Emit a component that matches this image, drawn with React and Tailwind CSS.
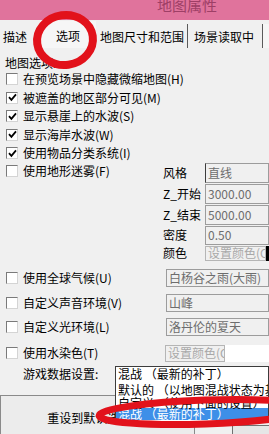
import React from 'react'

function Box(props)
{
    return (
        <span className="w-[12px] h-[12px] shrink-0 bg-white border border-[#7a7a7a] border-r-[#d4d4d4] border-b-[#d4d4d4] flex items-center justify-center">
            {props.checked && (
                <svg width="9" height="9" viewBox="0 0 9 9">
                    <path d="M1 4.2 L3.4 6.8 L8 1.4" fill="none" stroke="#000" strokeWidth="1.8" />
                </svg>
            )}
        </span>
    )
}

function Check(props)
{
    return (
        <div className={`flex items-center pl-[6px] ${props.h}`}>
            <Box checked={props.checked} />
            <span className="ml-[5px] leading-none whitespace-nowrap">{props.label}</span>
        </div>
    )
}

function Field(props)
{
    return (
        <div className={`flex-1 h-full bg-[#f0f0f0] border border-[#9c9c9c] flex items-center pl-[2px] text-[#6d6d6d] whitespace-nowrap overflow-hidden leading-none ${props.dark ? 'border-l-[#3c3c3c]' : ''}`}>
            {props.children}
        </div>
    )
}

export default function App()
{
    const checks = [
        { label: '在预览场景中隐藏微缩地图(H)', checked: false },
        { label: '被遮盖的地区部分可见(M)', checked: true },
        { label: '显示悬崖上的水波(S)', checked: true },
        { label: '显示海岸水波(W)', checked: true },
        { label: '使用物品分类系统(I)', checked: true },
    ];
    const fog = [
        { label: '风格', value: '直线', h: 'h-[20px]', dark: true },
        { label: 'Z_开始', value: '3000.00', h: 'h-[20px]' },
        { label: 'Z_结束', value: '5000.00', h: 'h-[20px]' },
        { label: '密度', value: '0.50', h: 'h-[19px]' },
    ];

    return (
        <div className="relative w-[269px] h-[434px] overflow-hidden bg-[#f0f0f0] text-[12px] text-black font-['Noto_Sans_CJK_SC',sans-serif]">
            {/* title bar */}
            <div className="h-[20px] bg-[#e0739c] flex justify-center items-start pl-[105px] overflow-hidden">
                <span className="text-[15px] leading-none text-[#9e3f66] -mt-[3px]">地图属性</span>
            </div>

            {/* tabs */}
            <div className="h-[28px] flex items-end text-[12px] leading-none whitespace-nowrap">
                <div className="w-[40px] h-[24px] flex items-center pl-[3px] pt-[2px]">描述</div>
                <div className="w-[56px] h-[27px] flex items-center justify-center bg-[#f6f6f6] pt-[2px]">选项</div>
                <div className="w-[92px] h-[24px] flex items-center pl-[4px] pt-[2px] border-r border-[#5a5a5a]">地图尺寸和范围</div>
                <div className="w-[75px] h-[24px] flex items-center pl-[6px] pt-[2px] border-r border-[#5a5a5a]">场景读取中</div>
                <div className="flex-1 h-[24px] bg-[#f6f6f6]"></div>
            </div>

            <div className="pt-[7px]">
                <div className="h-[15px] flex items-center pl-[5px] leading-none">地图选项:</div>
                {checks.map((c) => (
                    <Check key={c.label} label={c.label} checked={c.checked} h="h-[18.5px]" />
                ))}

                {/* fog group */}
                <div className="h-[98px] flex">
                    <div className="w-[163px]">
                        <Check label="使用地形迷雾(F)" checked={false} h="h-[16px]" />
                    </div>
                    <div className="flex-1 flex flex-col gap-[1px]">
                        {fog.map((f) => (
                            <div key={f.label} className={`flex items-center ${f.h}`}>
                                <span className="w-[42px] leading-none">{f.label}</span>
                                <Field dark={f.dark}>{f.value}</Field>
                            </div>
                        ))}
                        <div className="flex items-center h-[15px]">
                            <span className="w-[42px] leading-none">颜色</span>
                            <div className="w-[61px] h-full border border-[#b5b5b5] flex items-center pl-[2px] text-[#a8a8a8] overflow-hidden whitespace-nowrap leading-none">设置颜色(C</div>
                            <div className="w-[3px] h-full bg-black"></div>
                        </div>
                    </div>
                </div>

                {/* environment */}
                <div className="mt-[8px] h-[18px] flex items-center">
                    <div className="w-[166px]"><Check label="使用全球气候(U)" checked={false} h="h-[18px]" /></div>
                    <Field>白杨谷之雨(大雨)</Field>
                </div>
                <div className="mt-[7px] h-[18px] flex items-center">
                    <div className="w-[166px]"><Check label="自定义声音环境(V)" checked={false} h="h-[18px]" /></div>
                    <Field>山峰</Field>
                </div>
                <div className="mt-[6px] h-[18px] flex items-center">
                    <div className="w-[166px]"><Check label="自定义光环境(L)" checked={false} h="h-[18px]" /></div>
                    <Field>洛丹伦的夏天</Field>
                </div>
                <div className="mt-[9px] h-[17px] flex items-center">
                    <div className="w-[165px]"><Check label="使用水染色(T)" checked={false} h="h-[17px]" /></div>
                    <div className="w-[60px] h-full border border-[#b5b5b5] flex items-center pl-[2px] text-[#a8a8a8] overflow-hidden whitespace-nowrap leading-none">设置颜色(C</div>
                    <div className="flex-1 h-full bg-white"></div>
                </div>
                <div className="mt-[4px] h-[16px] flex items-center">
                    <span className="w-[115px] pl-[23px] leading-none">游戏数据设置:</span>
                    <div className="flex-1 h-full bg-white border border-[#3c3c3c] flex items-center pl-[2px] leading-none whitespace-nowrap">混战 （最新的补丁）</div>
                </div>

                {/* bottom buttons */}
                <div className="mt-[13px] flex">
                    <div className="w-[195px] h-[40px] border border-[#8a8a8a] bg-[#ececec] flex items-center justify-center pt-[7px] leading-none whitespace-nowrap">重设到默认选项(D)</div>
                    <div className="ml-[37px] mt-[30px] flex-1 h-[12px] border-l border-t border-[#707070] bg-[#e6e6e6]"></div>
                </div>
            </div>

            {/* open dropdown list */}
            <div className="absolute left-[115px] top-[381px] w-[154px] h-[41px] bg-white border border-[#3c3c3c] border-t-0 leading-none whitespace-nowrap overflow-hidden">
                <div className="h-[14px] flex items-center pl-[2px] mt-[2px]">默认的 （以地图混战状态为基础）</div>
                <div className="h-[11px] flex items-center pl-[2px]">自定义 （使用下面的设置）</div>
                <div className="h-[12px] flex items-center pl-[2px] bg-[#3d8fe8] text-white">混战 （最新的补丁）</div>
            </div>

            {/* red marker circles */}
            <svg className="absolute inset-0 pointer-events-none" width="269" height="434" viewBox="0 0 269 434">
                <ellipse cx="65" cy="40" rx="28" ry="25" transform="rotate(-8 65 40)" fill="none" stroke="#e2121b" strokeWidth="8" />
                <ellipse cx="205" cy="412" rx="106" ry="12" transform="rotate(-2 205 412)" fill="none" stroke="#e2121b" strokeWidth="7" />
            </svg>
        </div>
    )
}
